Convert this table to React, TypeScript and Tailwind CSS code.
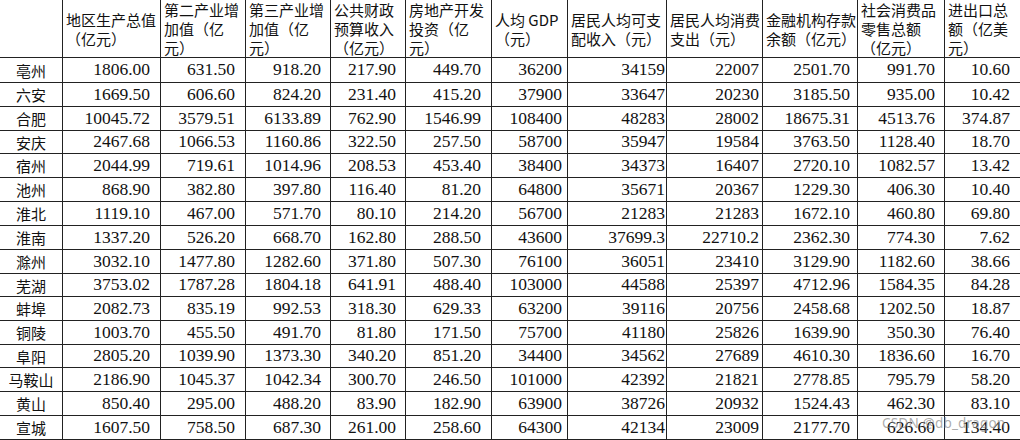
import React from "react";

const headers = [
  "",
  "地区生产总值（亿元）",
  "第二产业增加值（亿元）",
  "第三产业增加值（亿元）",
  "公共财政预算收入（亿元）",
  "房地产开发投资（亿元）",
  "人均 GDP（元）",
  "居民人均可支配收入（元）",
  "居民人均消费支出（元）",
  "金融机构存款余额（亿元）",
  "社会消费品零售总额（亿元）",
  "进出口总额（亿美元）",
];

const rows: string[][] = [
  ["亳州", "1806.00", "631.50", "918.20", "217.90", "449.70", "36200", "34159", "22007", "2501.70", "991.70", "10.60"],
  ["六安", "1669.50", "606.60", "824.20", "231.40", "415.20", "37900", "33647", "20230", "3185.50", "935.00", "10.42"],
  ["合肥", "10045.72", "3579.51", "6133.89", "762.90", "1546.99", "108400", "48283", "28002", "18675.31", "4513.76", "374.87"],
  ["安庆", "2467.68", "1066.53", "1160.86", "322.50", "257.50", "58700", "35947", "19584", "3763.50", "1128.40", "18.70"],
  ["宿州", "2044.99", "719.61", "1014.96", "208.53", "453.40", "38400", "34373", "16407", "2720.10", "1082.57", "13.42"],
  ["池州", "868.90", "382.80", "397.80", "116.40", "81.20", "64800", "35671", "20367", "1229.30", "406.30", "10.40"],
  ["淮北", "1119.10", "467.00", "571.70", "80.10", "214.20", "56700", "21283", "21283", "1672.10", "460.80", "69.80"],
  ["淮南", "1337.20", "526.20", "668.70", "162.80", "288.50", "43600", "37699.3", "22710.2", "2362.30", "774.30", "7.62"],
  ["滁州", "3032.10", "1477.80", "1282.60", "371.80", "507.30", "76100", "36051", "23410", "3129.90", "1182.60", "38.66"],
  ["芜湖", "3753.02", "1787.28", "1804.18", "641.91", "488.40", "103000", "44588", "25397", "4712.96", "1584.35", "84.28"],
  ["蚌埠", "2082.73", "835.19", "992.53", "318.30", "629.33", "63200", "39116", "20756", "2458.68", "1202.50", "18.87"],
  ["铜陵", "1003.70", "455.50", "491.70", "81.80", "171.50", "75700", "41180", "25826", "1639.90", "350.30", "76.40"],
  ["阜阳", "2805.20", "1039.90", "1373.30", "340.20", "851.20", "34400", "34562", "27689", "4610.30", "1836.60", "16.70"],
  ["马鞍山", "2186.90", "1045.37", "1042.34", "300.70", "246.50", "101000", "42392", "21821", "2778.85", "795.79", "58.20"],
  ["黄山", "850.40", "295.00", "488.20", "83.90", "182.90", "63900", "38726", "20932", "1524.43", "462.30", "83.10"],
  ["宣城", "1607.50", "758.50", "687.30", "261.00", "258.60", "64300", "42134", "23009", "2177.70", "626.60", "134.40"],
];

const padR = [
  "",
  "pr-[10px]",
  "pr-[10px]",
  "pr-[9px]",
  "pr-[9px]",
  "pr-[10px]",
  "pr-[5px]",
  "pr-[1px]",
  "pr-[3px]",
  "pr-[7px]",
  "pr-[9px]",
  "pr-[10px]",
];

const rowH = [
  "h-[25px]", "h-[24px]", "h-[24px]", "h-[23px]", "h-[24px]", "h-[24px]", "h-[24px]", "h-[24px]",
  "h-[24px]", "h-[23px]", "h-[24px]", "h-[24px]", "h-[23px]", "h-[24px]", "h-[24px]", "h-[24px]",
];

const cjk = "font-['Noto_Sans_CJK_SC',sans-serif]";
const serif = "font-['Liberation_Serif','Noto_Sans_CJK_SC',serif]";

export default function App() {
  return (
    <div className="relative w-[1020px] h-[440px] overflow-hidden bg-white text-[#111]">
      <div className="grid grid-cols-[63px_98px_85px_85px_75px_86px_76px_99px_96px_95px_87px_75px]">
        {headers.map((h, i) => (
          <div
            key={"h" + i}
            className={`h-[58px] flex items-center pl-[3px] pr-[1px] border-b border-[#222] ${i < 11 ? "border-r" : ""} ${cjk} text-[15px] leading-[19px]`}
          >
            <span>{h}</span>
          </div>
        ))}
        {rows.map((r, ri) =>
          r.map((c, ci) => (
            <div
              key={ri + "-" + ci}
              className={`${rowH[ri]} flex items-center border-b border-[#222] ${ci < 11 ? "border-r" : ""} ${
                ci === 0
                  ? `justify-center ${cjk} text-[15px]`
                  : `justify-end ${padR[ci]} ${serif} text-[17.5px]`
              } leading-none`}
            >
              {c}
            </div>
          ))
        )}
      </div>
      <div className="absolute left-[882px] top-[413px] font-['Noto_Sans',sans-serif] text-[13.5px] text-[#888]/70 tracking-[0.2px]">
        CSDN @db_dragon
      </div>
    </div>
  );
}
